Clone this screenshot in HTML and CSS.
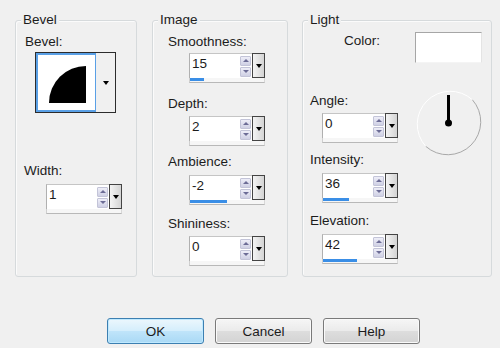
FILE: index.html
```html
<!DOCTYPE html>
<html>
<head>
<meta charset="utf-8">
<link rel="stylesheet" href="styles.css">
</head>
<body>
<div class="dialog">
  <div class="groups">
    <section class="group g-bevel">
      <span class="legend">Bevel</span>
      <div class="lbl l-bevel">Bevel:</div>
      <div class="picker">
        <div class="picker-preview">
          <svg width="57" height="57" viewBox="0 0 57 57"><path d="M11 48 A37 37 0 0 1 48 11 V48 Z" fill="#000"/></svg>
        </div>
        <div class="picker-btn"><i class="tri"></i></div>
      </div>
      <div class="lbl l-width">Width:</div>
      <div class="spin s-width">
        <div class="spin-top"><div class="spin-box"><span class="val">1</span><div class="arrows"><i class="arr up"></i><i class="arr down"></i></div></div><div class="drop"><i class="tri"></i></div></div>
        <div class="track"></div>
      </div>
    </section>

    <section class="group g-image">
      <span class="legend">Image</span>
      <div class="lbl l-smooth">Smoothness:</div>
      <div class="spin s-smooth">
        <div class="spin-top"><div class="spin-box"><span class="val">15</span><div class="arrows"><i class="arr up"></i><i class="arr down"></i></div></div><div class="drop"><i class="tri"></i></div></div>
        <div class="track"><div class="fill" style="width:14px"></div></div>
      </div>
      <div class="lbl l-depth">Depth:</div>
      <div class="spin s-depth">
        <div class="spin-top"><div class="spin-box"><span class="val">2</span><div class="arrows"><i class="arr up"></i><i class="arr down"></i></div></div><div class="drop"><i class="tri"></i></div></div>
        <div class="track"></div>
      </div>
      <div class="lbl l-amb">Ambience:</div>
      <div class="spin s-amb">
        <div class="spin-top"><div class="spin-box"><span class="val">-2</span><div class="arrows"><i class="arr up"></i><i class="arr down"></i></div></div><div class="drop"><i class="tri"></i></div></div>
        <div class="track"><div class="fill" style="width:37px"></div></div>
      </div>
      <div class="lbl l-shine">Shininess:</div>
      <div class="spin s-shine">
        <div class="spin-top"><div class="spin-box"><span class="val">0</span><div class="arrows"><i class="arr up"></i><i class="arr down"></i></div></div><div class="drop"><i class="tri"></i></div></div>
        <div class="track"></div>
      </div>
    </section>

    <section class="group g-light">
      <span class="legend">Light</span>
      <div class="color-row">
        <div class="lbl l-color">Color:</div>
        <div class="swatch"></div>
      </div>
      <div class="angle-row">
        <div class="angle-col">
          <div class="lbl l-angle">Angle:</div>
          <div class="spin s-angle">
            <div class="spin-top"><div class="spin-box"><span class="val">0</span><div class="arrows"><i class="arr up"></i><i class="arr down"></i></div></div><div class="drop"><i class="tri"></i></div></div>
            <div class="track"></div>
          </div>
        </div>
        <svg class="dial" width="68" height="68" viewBox="0 0 68 68">
          <path d="M57.3 10.7 A33 33 0 0 1 10.7 57.3" fill="none" stroke="#a8a8a8" stroke-width="1"/>
          <path d="M10.7 57.3 A33 33 0 0 1 57.3 10.7" fill="none" stroke="#ffffff" stroke-width="1"/>
          <line x1="33.5" y1="34" x2="33.5" y2="6" stroke="#000" stroke-width="3"/>
          <circle cx="33.5" cy="34" r="3.5" fill="#000"/>
        </svg>
      </div>
      <div class="lbl l-int">Intensity:</div>
      <div class="spin s-int">
        <div class="spin-top"><div class="spin-box"><span class="val">36</span><div class="arrows"><i class="arr up"></i><i class="arr down"></i></div></div><div class="drop"><i class="tri"></i></div></div>
        <div class="track"><div class="fill" style="width:26px"></div></div>
      </div>
      <div class="lbl l-elev">Elevation:</div>
      <div class="spin s-elev">
        <div class="spin-top"><div class="spin-box"><span class="val">42</span><div class="arrows"><i class="arr up"></i><i class="arr down"></i></div></div><div class="drop"><i class="tri"></i></div></div>
        <div class="track"><div class="fill" style="width:34px"></div></div>
      </div>
    </section>
  </div>

  <div class="buttons">
    <button class="btn btn-default">OK</button>
    <button class="btn">Cancel</button>
    <button class="btn">Help</button>
  </div>
</div>
</body>
</html>
```

FILE: styles.css
```css
* { box-sizing: border-box; }
html, body {
  margin: 0;
  padding: 0;
  background: #f0f0f0;
  width: 500px;
  height: 348px;
  overflow: hidden;
}
body {
  font-family: "Liberation Sans", Arial, sans-serif;
  font-size: 13.5px;
  line-height: 16px;
  color: #1c1c1c;
}
.dialog {
  padding: 20px 0 0 15px;
}
.groups {
  display: flex;
  align-items: flex-start;
}
.group {
  position: relative;
  height: 257px;
  border: 1px solid #d6dadc;
  border-radius: 3px;
  box-shadow: inset 1px 1px 0 #fbfbfb;
}
.g-bevel { width: 122px; }
.g-image { width: 136px; margin-left: 15px; }
.g-light { width: 190px; margin-left: 14px; }

.legend {
  position: absolute;
  top: -9px;
  left: 5px;
  padding: 0 2px;
  background: #f0f0f0;
}
.lbl { white-space: nowrap; }

/* Bevel group */
.l-bevel { margin: 13px 0 0 9px; }
.picker {
  display: flex;
  width: 81px;
  height: 61px;
  margin: 2px 0 0 19px;
  border: 1px solid #2c2c2c;
}
.picker-preview {
  width: 60px;
  height: 59px;
  background: #fff;
  border: 2px solid #5aa0e6;
  border-right-width: 1px;
  display: flex;
  align-items: flex-start;
  justify-content: flex-start;
}
.picker-btn {
  flex: 1;
  background: #f0f0f0;
  display: flex;
  align-items: center;
  justify-content: center;
}
.tri {
  display: block;
  width: 0;
  height: 0;
  border-left: 3.5px solid transparent;
  border-right: 3.5px solid transparent;
  border-top: 4px solid #000;
}
.l-width { margin: 50px 0 0 8px; }
.s-width { margin: 5px 0 0 30px; }

/* Spinner */
.spin {
  width: 76px;
}
.spin-top {
  display: flex;
  height: 25px;
}
.spin-box {
  flex: 1;
  display: flex;
  justify-content: space-between;
  background: #fff;
  border-top: 1px solid #c5c5c5;
  border-left: 1px solid #b0b0b0;
  padding-left: 2px;
}
.val {
  line-height: 18px;
  padding-top: 1px;
}
.arrows {
  display: flex;
  flex-direction: column;
  justify-content: center;
  gap: 1px;
  width: 11px;
  margin-right: 1px;
}
.arr {
  display: flex;
  align-items: center;
  justify-content: center;
  height: 10px;
  background: linear-gradient(#eeeef8, #cfd0e4);
  border: 1px solid #c3c4d8;
  border-radius: 1px;
}
.arr::after {
  content: "";
  display: block;
  width: 0;
  height: 0;
  border-left: 3px solid transparent;
  border-right: 3px solid transparent;
}
.up::after { border-bottom: 3px solid #6c6c96; }
.down::after { border-top: 3px solid #6c6c96; }
.drop {
  width: 13px;
  height: 25px;
  border: 1px solid #444;
  background: linear-gradient(90deg, #f4f4f4, #d4d4d4);
  display: flex;
  align-items: center;
  justify-content: center;
}
.track {
  height: 5px;
  width: 76px;
  background: #f6f6f6;
  border-left: 1px solid #cfcfcf;
  border-bottom: 1px solid #b8b8b8;
  border-right: 1px solid #d8d8d8;
}
.fill {
  height: 3px;
  background: #3a8ee6;
}

/* Image group */
.l-smooth { margin: 13px 0 0 15px; }
.s-smooth { margin: 3px 0 0 36px; }
.l-depth { margin: 13px 0 0 15px; }
.s-depth { margin: 4px 0 0 36px; }
.l-amb { margin: 8px 0 0 15px; }
.s-amb { margin: 5px 0 0 36px; }
.l-shine { margin: 11px 0 0 15px; }
.s-shine { margin: 4px 0 0 36px; }

/* Light group */
.color-row {
  display: flex;
  align-items: flex-start;
  margin-top: 11px;
}
.l-color { margin: 1px 0 0 41px; }
.swatch {
  width: 67px;
  height: 31px;
  margin-left: 35px;
  background: #fff;
  border-top: 1px solid #a6a6a6;
  border-left: 1px solid #a6a6a6;
  border-right: 1px solid #e4e4e4;
  border-bottom: 1px solid #f4f4f4;
}
.angle-row {
  display: flex;
  align-items: flex-start;
}
.angle-col { width: 100px; }
.l-angle { margin: 30px 0 0 7px; }
.s-angle { margin: 4px 0 0 19px; }
.dial {
  display: block;
  margin: 26px 0 -14px 12px;
}
.l-int { margin: 9px 0 0 7px; }
.s-int { margin: 5px 0 0 19px; }
.l-elev { margin: 10px 0 0 7px; }
.s-elev { margin: 5px 0 0 19px; }

/* Buttons */
.buttons {
  display: flex;
  gap: 11px;
  margin: 41px 0 0 92px;
}
.btn {
  width: 97px;
  height: 26px;
  font-family: "Liberation Sans", Arial, sans-serif;
  font-size: 13.5px;
  color: #1c1c1c;
  border: 1px solid #7a7a7a;
  border-radius: 3px;
  background: linear-gradient(#f6f6f6, #ebebeb 48%, #dddddd 52%, #d3d3d3);
  box-shadow: inset 0 0 0 1px #fafafa;
  padding: 0;
}
.btn-default {
  border-color: #3c7fb1;
  background: linear-gradient(#ecf7fd, #d5eefc 48%, #bfe4fa 52%, #a9d9f5);
  box-shadow: inset 0 0 0 1px #bfe9ff;
}
```
